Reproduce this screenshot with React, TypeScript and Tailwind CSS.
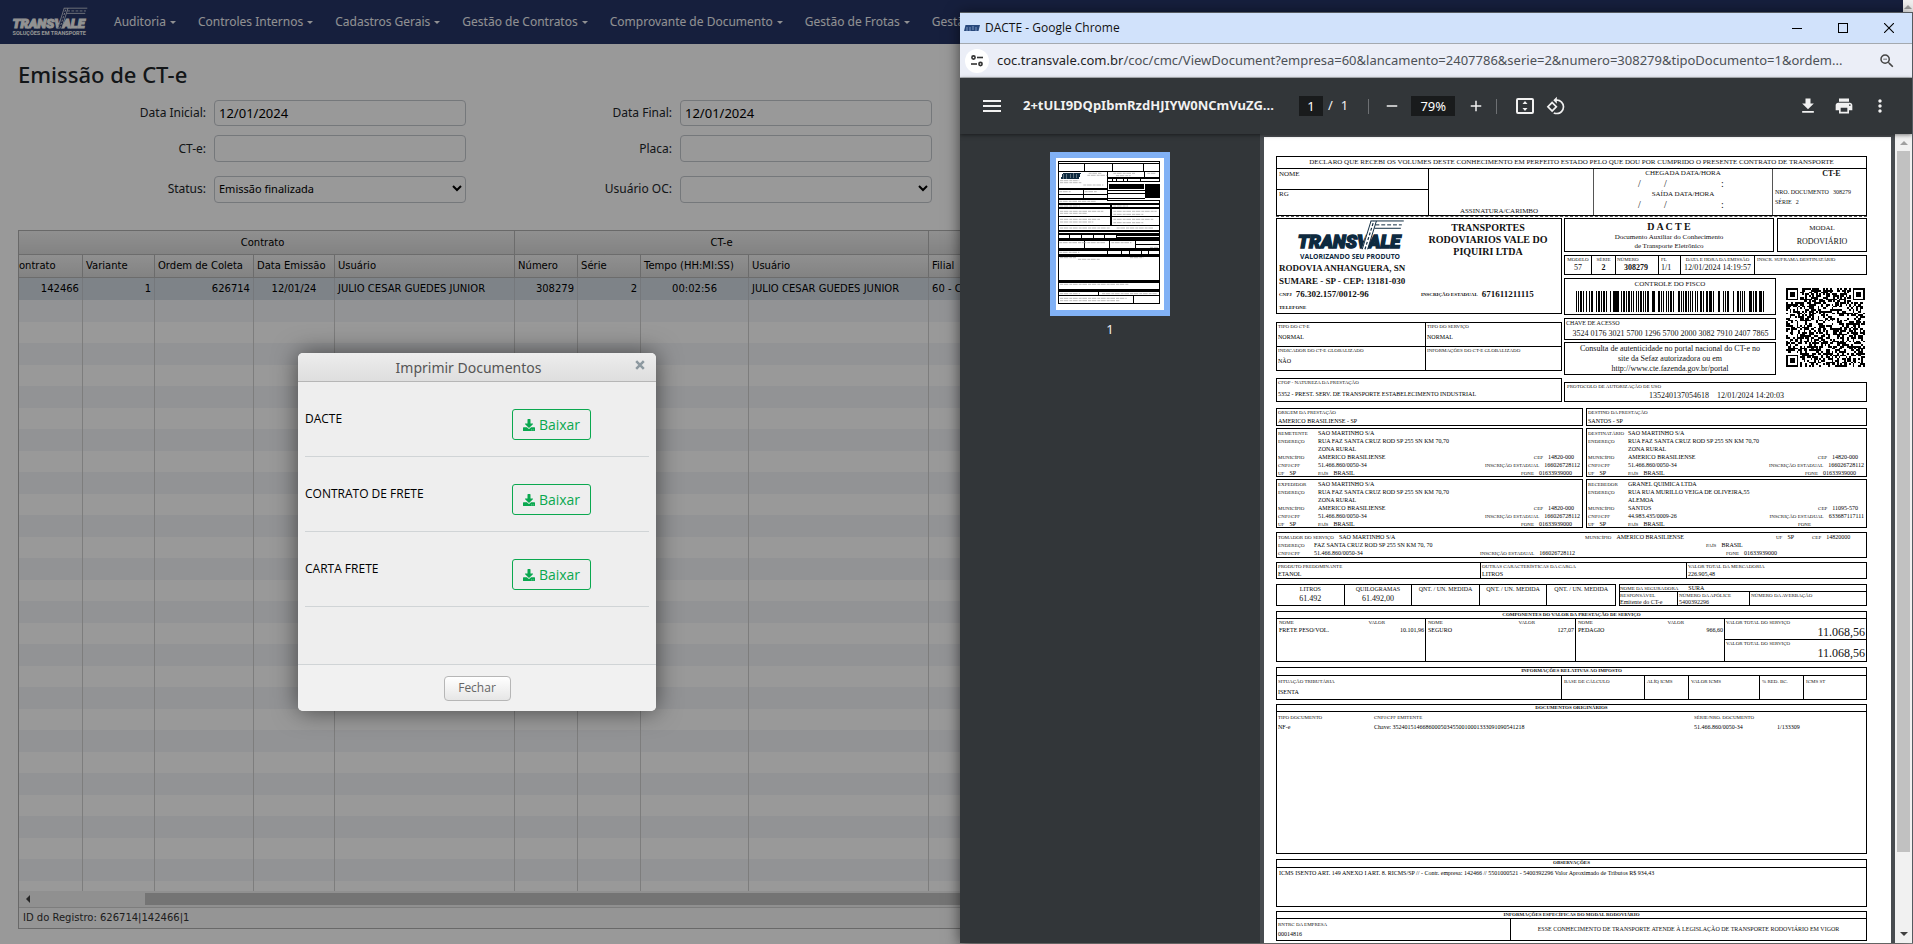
import type { ReactNode } from "react";
import { FaDownload } from "react-icons/fa";
import {
  MdMenu,
  MdRemove,
  MdAdd,
  MdDownload,
  MdPrint,
  MdMoreVert,
  MdZoomOut,
  MdRotate90DegreesCcw,
} from "react-icons/md";

const CODE128 =
  "212222,222122,222221,121223,121322,131222,122213,122312,132212,221213,221312,231212,112232,122132,122231,113222,123122,123221,223211,221132,221231,213212,223112,312131,311222,321122,321221,312212,322112,322211,212123,212321,232121,111323,131123,131321,112313,132113,132311,211313,231113,231311,112133,112331,132131,113123,113321,133121,313121,211331,231131,213113,213311,213131,311123,311321,331121,312113,312311,332111,314111,221411,431111,111224,111422,121124,121421,141122,141221,112214,112412,122114,122411,142112,142211,241211,221114,413111,241112,134111,111242,121142,121241,114212,124112,124211,411212,421112,421211,212141,214121,412121,111143,111341,131141,114113,114311,411113,411311,113141,114131,311141,411131,211412,211214,211232,2331112".split(
    ",",
  );

function barcodePath(digits: string) {
  const codes = [105];
  for (let i = 0; i < digits.length; i += 2) codes.push(Number(digits.slice(i, i + 2)));
  const sum = codes.reduce((a, c, i) => a + c * Math.max(i, 1), 0);
  codes.push(sum % 103, 106);
  let x = 0;
  let d = "";
  codes.forEach((c) =>
    CODE128[c].split("").forEach((w, i) => {
      if (i % 2 === 0) d += `M${x} 0h${w}v20h-${w}z`;
      x += Number(w);
    }),
  );
  return { d, width: x };
}

function qrPath(n: number) {
  let seed = 77;
  const rnd = () => (seed = (seed * 16807) % 2147483647) / 2147483647;
  const inFinder = (x: number, y: number) =>
    (x < 8 && y < 8) || (x >= n - 8 && y < 8) || (x < 8 && y >= n - 8);
  let d = "";
  for (let y = 0; y < n; y++)
    for (let x = 0; x < n; x++) if (rnd() > 0.48 && !inFinder(x, y)) d += `M${x} ${y}h1v1h-1z`;
  [
    [0, 0],
    [n - 7, 0],
    [0, n - 7],
  ].forEach(([x, y]) => {
    d += `M${x} ${y}h7v7h-7zM${x + 1} ${y + 1}v5h5v-5zM${x + 2} ${y + 2}h3v3h-3z`;
  });
  return d;
}

const barcode = barcodePath("35240176302157001296570020003082791024077865");
const qr = qrPath(45);

function Logo({ className, color, gap, tagline, taglineFont, taglineSize }: {
  className: string;
  color: string;
  gap: string;
  tagline: string;
  taglineFont: string;
  taglineSize: number;
}) {
  return (
    <svg viewBox="0 0 110 44" className={className} role="img" aria-label={`TRANSVALE ${tagline}`}>
      <text
        x="53"
        y="30"
        textAnchor="middle"
        fontFamily="Roboto, 'Liberation Sans', sans-serif"
        fontWeight="900"
        fontStyle="italic"
        fontSize="19"
        fill={color}
        stroke={color}
        strokeWidth="1.500"
      >
        TRANSVALE
      </text>
      <path d="M66 31L75 2h6l-9 29z" fill={gap} />
      <path d="M66.500 31L75.500 2M72 31L81 2" stroke={color} strokeWidth="1" fill="none" />
      <path d="M69.300 31L78.300 2" stroke={color} strokeWidth="1.200" strokeDasharray="3 2" />
      <path d="M75 2h34" stroke={color} strokeWidth="1" />
      <path d="M80 6h27" stroke={color} strokeWidth="1" strokeDasharray="4 2" />
      <path d="M79 9.500h27" stroke={color} strokeWidth="1" />
      <text
        x="54"
        y="41"
        textAnchor="middle"
        fontFamily={taglineFont}
        fontWeight="700"
        fontSize={taglineSize}
        fill={color}
      >
        {tagline}
      </text>
    </svg>
  );
}

const menu = [
  "Auditoria",
  "Controles Internos",
  "Cadastros Gerais",
  "Gestão de Contratos",
  "Comprovante de Documento",
  "Gestão de Frotas",
  "Gestão de Pessoas",
];

function NavBar() {
  return (
    <nav className="flex h-11 shrink-0 items-center overflow-hidden bg-[#253466] pl-3">
      <Logo
        className="h-9 w-[76px] shrink-0"
        color="#f4f4f4"
        gap="#253466"
        tagline="SOLUÇÕES EM TRANSPORTE"
        taglineFont="Roboto, 'Liberation Sans', sans-serif"
        taglineSize={8}
      />
      <div className="flex items-center gap-[22px] pl-[26px]">
        {menu.map((m) => (
          <button
            key={m}
            type="button"
            className="flex shrink-0 items-center gap-1 whitespace-nowrap text-[12px] leading-5 text-[#f0f1f4]"
          >
            {m}
            <svg viewBox="0 0 6 3" className="h-[3px] w-[6px]" aria-hidden="true">
              <path d="M0 0h6L3 3z" fill="currentColor" />
            </svg>
          </button>
        ))}
      </div>
    </nav>
  );
}

const fieldClass = "w-full rounded-[4px] border border-[#c4c8ce] bg-white text-black";

function SelectField({ id, value }: { id: string; value: string }) {
  return (
    <div className="relative">
      <select id={id} defaultValue={value} className={`${fieldClass} h-[27px] appearance-none px-1 text-[11px]`}>
        <option value={value}>{value}</option>
      </select>
      <svg viewBox="0 0 10 7" className="pointer-events-none absolute right-[4px] top-[10px] h-[7px] w-[10px]" aria-hidden="true">
        <path d="M1 1l4 4 4-4" fill="none" stroke="#000" strokeWidth="2" />
      </svg>
    </div>
  );
}

function Filters() {
  const label = "text-right text-[12px] leading-5 text-[#212529]";
  return (
    <form className="grid grid-cols-[188px_252px_198px_252px] items-center gap-x-2 pl-[18px]">
      <label htmlFor="di" className={label}>Data Inicial:</label>
      <input id="di" defaultValue="12/01/2024" className={`${fieldClass} h-[26px] px-1 text-[13px]`} />
      <label htmlFor="df" className={label}>Data Final:</label>
      <input id="df" defaultValue="12/01/2024" className={`${fieldClass} h-[26px] px-1 text-[13px]`} />
      <label htmlFor="cte" className={`${label} mt-[9px]`}>CT-e:</label>
      <input id="cte" className={`${fieldClass} mt-[9px] h-[27px] px-1 text-[13px]`} />
      <label htmlFor="placa" className={`${label} mt-[9px]`}>Placa:</label>
      <input id="placa" className={`${fieldClass} mt-[9px] h-[27px] px-1 text-[13px]`} />
      <label htmlFor="status" className={`${label} mt-[13px]`}>Status:</label>
      <div className="mt-[13px]"><SelectField id="status" value="Emissão finalizada" /></div>
      <label htmlFor="uoc" className={`${label} mt-[13px]`}>Usuário OC:</label>
      <div className="mt-[13px]"><SelectField id="uoc" value="" /></div>
    </form>
  );
}

const columns = ["Contrato", "Variante", "Ordem de Coleta", "Data Emissão", "Usuário", "Número", "Série", "Tempo (HH:MI:SS)", "Usuário", "Filial"];
const record = ["142466", "1", "626714", "12/01/24", "JULIO CESAR GUEDES JUNIOR", "308279", "2", "00:02:56", "JULIO CESAR GUEDES JUNIOR", "60 - CTE"];
const alignment = ["text-right", "text-right", "text-right", "text-center", "text-left", "text-right", "text-right", "text-center", "text-left", "text-left"];

function DataGrid() {
  const head = "border-b border-r border-[#b4b4b4] bg-linear-to-b from-[#f0f0f0] to-[#dadada] font-normal";
  return (
    <section className="mx-[18px] mb-[15px] mt-[27px] flex min-h-0 flex-1 flex-col border border-[#b0b0b0] text-[10px] text-black [font-family:'DejaVu_Sans',sans-serif]">
      <div className="min-h-0 flex-1 overflow-hidden">
        <table className="w-full table-fixed border-separate border-spacing-0">
          <colgroup>
            <col className="w-[64px]" />
            <col className="w-[72px]" />
            <col className="w-[99px]" />
            <col className="w-[81px]" />
            <col className="w-[180px]" />
            <col className="w-[63px]" />
            <col className="w-[63px]" />
            <col className="w-[108px]" />
            <col className="w-[180px]" />
            <col />
          </colgroup>
          <thead>
            <tr className="h-6">
              <th colSpan={5} className={`${head} pr-2`}>Contrato</th>
              <th colSpan={4} className={head}>CT-e</th>
              <th className={head} />
            </tr>
            <tr className="h-[23px]">
              {columns.map((c, i) => (
                <th key={i} className={`${head} overflow-hidden whitespace-nowrap text-left ${i === 0 ? "pl-0" : "pl-[3px]"}`}>
                  {i === 0 ? <span className="-ml-[7px]">{c}</span> : c}
                </th>
              ))}
            </tr>
          </thead>
          <tbody>
            <tr className="h-[22px] bg-[#d3dbe3]">
              {record.map((v, i) => (
                <td key={i} className={`overflow-hidden whitespace-nowrap border-r border-[#c3c9cf] px-[3px] ${alignment[i]}`}>{v}</td>
              ))}
            </tr>
            {Array.from({ length: 28 }, (_, r) => (
              <tr key={r} className={r % 2 === 0 ? "h-[22px] bg-[#f3f6f9]" : "h-[21px] bg-white"}>
                {columns.map((_c, i) => (
                  <td key={i} className="border-r border-[#d0d0d0]" />
                ))}
              </tr>
            ))}
          </tbody>
        </table>
      </div>
      <div className="flex h-4 shrink-0 items-center bg-[#f1f1f1] pl-[7px]">
        <svg viewBox="0 0 4 8" className="h-2 w-1" aria-hidden="true"><path d="M4 0v8L0 4z" fill="#404040" /></svg>
        <div className="ml-[115px] h-3 flex-1 bg-[#c1c1c1]" />
      </div>
      <div className="flex h-[21px] shrink-0 items-center border-t border-[#d0d0d0] bg-[#f8f8f8] pl-1 text-[#333] pb-[2px]">
        ID do Registro: 626714|142466|1
      </div>
    </section>
  );
}

function PrintDialog() {
  return (
    <div
      role="dialog"
      aria-label="Imprimir Documentos"
      className="absolute left-[298px] top-[353px] flex w-[358px] flex-col overflow-hidden rounded-[5px] bg-[#eeeeee] shadow-[0_0_25px_rgba(0,0,0,0.55)] [font-family:'Open_Sans',sans-serif]"
    >
      <header className="flex h-[29px] items-center border-b border-[#b6b6b6] bg-linear-to-b from-[#ededed] to-[#dedede] pr-[11px]">
        <h2 className="flex-1 pl-1 text-center text-[14px] text-[#555] [font-family:'Noto_Sans',sans-serif]">Imprimir Documentos</h2>
        <button type="button" aria-label="Fechar janela" className="-mt-1 text-[#8d99a0]">
          <svg viewBox="0 0 10 10" className="size-[10px]">
            <path d="M1.200 1.200l7.600 7.600M8.800 1.200L1.200 8.800" stroke="currentColor" strokeWidth="2.500" />
          </svg>
        </button>
      </header>
      <div className="h-[282px] px-[7px]">
        {["DACTE", "CONTRATO DE FRETE", "CARTA FRETE"].map((name) => (
          <div key={name} className="flex h-[75px] items-center border-b border-[#d0d4d6] pt-[11px]">
            <span className="w-[207px] pb-3 text-[12px] text-black">{name}</span>
            <button type="button" className="flex h-[31px] w-[79px] items-center justify-center gap-1 rounded-[3px] border border-[#0aa84f] text-[14px] text-[#0aa84f]">
              <FaDownload size={12} />
              Baixar
            </button>
          </div>
        ))}
      </div>
      <footer className="flex h-[47px] items-center justify-center border-t border-[#d0d4d6] bg-[#f1f1f1]">
        <button type="button" className="h-[25px] w-[67px] rounded-[4px] border border-[#b6b6b6] bg-linear-to-b from-white to-[#e6e6e6] text-[12px] text-[#666]">
          Fechar
        </button>
      </footer>
    </div>
  );
}

function Thumbnail() {
  const black = "M324 483h306v4H324zM324 490h306v3H324zM324 513h306v4H324zM324 563h149v6H324zM324 581h149v3H324zM324 594h149v5H324zM472 531h158v5H472zM472 543h158v3H472zM477 552h105v16H477zM585 552h45v42h-45zM472 570h112v4H472zM472 578h112v5H472zM472 594h112v3H472zM324 608h149v6H324zM472 600h158v3H472zM472 610h158v4H472zM324 622h306v6H324zM324 648h306v3H324zM324 674h306v4H324zM324 690h306v6H324zM324 700h306v5H324zM500 705h130v3H500zM324 714h306v8H324zM500 710h130v3H500zM556 732h74v3h-74zM324 744h306v9H324zM324 762h306v8H324zM324 840h306v9H324zM324 867h306v9H324zM324 885h306v4H324zM324 909h306v3H324z";
  return (
    <svg viewBox="318 474 324 456" className="h-[152px] w-[108px] bg-white" shapeRendering="crispEdges" role="img" aria-label="Página 1">
      <path d={black} fill="#000" />
      <path d="M325.5 484v427M628.500 484v60M628.500 600v311M403.500 490v24M488.500 490v24M580.500 490v24M472.500 516v84M400.500 566v30M582.500 514v18M484 612v64M481 612v64M402.500 720v26M478.500 720v26M557.500 720v26M358.500 704v12M394.500 704v12M430.500 704v12M464.500 704v12M500.500 704v12M472.500 752v12M515.500 752v12M538.500 752v12M574.500 752v12M596.500 752v12M445.500 874v12M550.500 886v24M486.500 536v8M500.500 536v8M520.500 536v8M533.500 536v8M572.500 536v8" stroke="#000" strokeWidth="3" fill="none" />
      <path d="M416 520h40M412 526h60M330 542h58M330 548h64M400 555h60M328 575h34M404 575h36M328 604h110M490 520h66M498 527h44M592 520h24M330 618h60M490 618h44M330 634h130M490 634h130M330 640h80M490 643h90M330 658h120M490 658h120M330 666h100M490 668h90M330 684h150M500 684h110M328 728h140M484 728h60M600 742h24M328 757h60M330 773h48M384 778h66M540 773h40M330 853h206M330 881h60M456 881h164M330 895h200M330 902h180" stroke="#9a9a9a" strokeWidth="2" strokeDasharray="9 2 14 3" fill="none" shapeRendering="auto" />
      <path d="M333 536l5-17h54l-5 17z" fill="#0e2a3f" />
      <path d="M341 522v14M350 522v14M360 521v14M369 520v14M378 521v14" stroke="#fff" strokeWidth="1" />
    </svg>
  );
}

const box = "border border-black";
const lab = "text-[5px] leading-[7px] text-[#111]";
const val = "text-[6px] leading-2 text-black";

function Pair({ l, v, className }: { l: string; v: string; className: string }) {
  return (
    <span className={`flex items-center gap-[5px] ${className}`}>
      <span className={lab}>{l}</span>
      <span className={val}>{v}</span>
    </span>
  );
}

type PartyData = { role: string; name: string; address: string; area: string; city: string; id: string; cep: string; ie: string; phone: string };

function Party({ p }: { p: PartyData }) {
  const row = (l: string, v: string, right?: ReactNode) => (
    <div className="flex h-2 items-center">
      <span className={`w-10 ${lab}`}>{l}</span>
      <span className={`flex-1 ${val}`}>{v}</span>
      {right}
    </div>
  );
  return (
    <div className={`${box} h-[49px] min-w-0 pl-px`}>
      {row(p.role, p.name)}
      {row("ENDEREÇO", p.address)}
      {row("", p.area)}
      {row("MUNICÍPIO", p.city, <Pair l="CEP" v={p.cep} className="pr-2" />)}
      {row("CNPJ/CPF", p.id, <Pair l="INSCRIÇÃO ESTADUAL" v={p.ie} className="pr-0.5" />)}
      <div className="flex h-2 items-center">
        <Pair l="UF" v="SP" className="w-10" />
        <Pair l="PAÍS" v="BRASIL" className="flex-1" />
        <Pair l="FONE" v={p.phone} className={p.phone ? "pr-[10px]" : "pr-[50px]"} />
      </div>
    </div>
  );
}

const parties: PartyData[] = [
  { role: "REMETENTE", name: "SAO MARTINHO S/A", address: "RUA FAZ SANTA CRUZ ROD SP 255 SN KM 70,70", area: "ZONA RURAL", city: "AMERICO BRASILIENSE", id: "51.466.860/0050-34", cep: "14820-000", ie: "166026728112", phone: "01633939000" },
  { role: "DESTINATÁRIO", name: "SAO MARTINHO S/A", address: "RUA FAZ SANTA CRUZ ROD SP 255 SN KM 70,70", area: "ZONA RURAL", city: "AMERICO BRASILIENSE", id: "51.466.860/0050-34", cep: "14820-000", ie: "166026728112", phone: "01633939000" },
  { role: "EXPEDIDOR", name: "SAO MARTINHO S/A", address: "RUA FAZ SANTA CRUZ ROD SP 255 SN KM 70,70", area: "ZONA RURAL", city: "AMERICO BRASILIENSE", id: "51.466.860/0050-34", cep: "14820-000", ie: "166026728112", phone: "01633939000" },
  { role: "RECEBEDOR", name: "GRANEL QUIMICA LTDA", address: "RUA RUA MURILLO VEIGA DE OLIVEIRA,55", area: "ALEMOA", city: "SANTOS", id: "44.983.435/0009-26", cep: "11095-570", ie: "633687117111", phone: "" },
];

function Stack({ l, v, className = "", big = "" }: { l: string; v?: string; className?: string; big?: string }) {
  return (
    <div className={`flex min-w-0 flex-col whitespace-nowrap ${className}`}>
      <span className={lab}>{l}</span>
      {v ? <span className={big || val}>{v}</span> : null}
    </div>
  );
}

function Slashes() {
  return (
    <div className="grid h-[13px] grid-cols-[44px_26px_57px_1fr] text-[10px] leading-[13px]">
      <span />
      <span>/</span>
      <span>/</span>
      <span>:</span>
    </div>
  );
}

function SectionTitle({ children, className = "h-[7px]" }: { children: ReactNode; className?: string }) {
  return <div className={`border-b border-black text-center text-[5px] font-bold leading-[6px] ${className}`}>{children}</div>;
}

function Receipt() {
  return (
    <div className={box}>
      <div className="h-3 whitespace-nowrap border-b border-black text-center text-[7px] leading-[11px]">
        DECLARO QUE RECEBI OS VOLUMES DESTE CONHECIMENTO EM PERFEITO ESTADO PELO QUE DOU POR CUMPRIDO O PRESENTE CONTRATO DE TRANSPORTE
      </div>
      <div className="grid h-[46px] grid-cols-[152px_165px_179px_1fr] text-[7px] leading-[10px]">
        <div className="grid grid-rows-[21px_1fr] border-r border-black">
          <div className="border-b border-black pl-0.5">NOME</div>
          <div className="pl-0.5 leading-2">RG</div>
        </div>
        <div className="flex items-end justify-center border-r border-[#555] pr-6 leading-2">ASSINATURA/CARIMBO</div>
        <div className="border-r border-[#555]">
          <div className="text-center leading-2">CHEGADA DATA/HORA</div>
          <Slashes />
          <div className="text-center leading-2">SAÍDA DATA/HORA</div>
          <Slashes />
        </div>
        <div className="px-0.5">
          <div className="pl-6 text-center text-[8px] font-bold">CT-E</div>
          <div className="mt-2 flex gap-1 whitespace-nowrap text-[6px]"><span>NRO. DOCUMENTO</span><span>308279</span></div>
          <div className="flex gap-1 text-[6px]"><span>SÉRIE</span><span>2</span></div>
        </div>
      </div>
    </div>
  );
}

function IssuerAndKeys() {
  const addr = "flex h-[13px] items-center whitespace-nowrap text-[9px] font-bold leading-[13px]";
  return (
    <div className="grid grid-cols-[286px_303px] gap-x-[2px] border-t border-dashed border-[#555] pt-px">
      <div className="flex flex-col">
        <div className={`${box} h-[96px] pl-0.5`}>
          <div className="flex h-[43px]">
            <Logo className="ml-4 h-[43px] w-[112px]" color="#0e2a3f" gap="#ffffff" tagline="VALORIZANDO SEU PRODUTO" taglineFont="'Open Sans', sans-serif" taglineSize={7} />
            <p className="flex-1 whitespace-nowrap pl-2 pt-[3px] text-center text-[10px] font-bold leading-[12px]">
              TRANSPORTES<br />RODOVIARIOS VALE DO<br />PIQUIRI LTDA
            </p>
          </div>
          <div className={addr}>RODOVIA ANHANGUERA, SN</div>
          <div className={addr}>SUMARE - SP - CEP: 13181-030</div>
          <div className={addr}>
            <span className="flex w-[142px] gap-1"><span className="text-[5px]">CNPJ</span><span>76.302.157/0012-96</span></span>
            <span className="flex gap-1"><span className="text-[5px]">INSCRIÇÃO ESTADUAL</span><span>671611211115</span></span>
          </div>
          <div className={addr}><span className="text-[5px]">TELEFONE</span></div>
        </div>
        <div className={`${box} mt-2 grid h-[49px] grid-cols-[149px_1fr] grid-rows-2`}>
          <Stack className="gap-[3px] border-b border-r border-black pl-px" l="TIPO DO CT-E" v="NORMAL" />
          <Stack className="gap-[3px] border-b border-black pl-px" l="TIPO DO SERVIÇO" v="NORMAL" />
          <Stack className="gap-[3px] border-r border-black pl-px" l="INDICADOR DO CT-E GLOBALIZADO" v="NÃO" />
          <Stack className="pl-px" l="INFORMAÇÕES DO CT-E GLOBALIZADO" />
        </div>
        <div className={`${box} mt-[7px] h-6`}>
          <Stack className="gap-1 pl-px" l="CFOP - NATUREZA DA PRESTAÇÃO" v="5352 - PREST. SERV. DE TRANSPORTE ESTABELECIMENTO INDUSTRIAL" />
        </div>
      </div>
      <div className="flex flex-col">
        <div className="grid h-[34px] grid-cols-[210px_1fr] gap-x-[3px] text-center">
          <div className={`${box} pt-0.5`}>
            <div className="text-[10px] font-bold leading-[12px]">D A C T E</div>
            <div className="text-[7px] leading-[9px]">Documento Auxiliar do Conhecimento<br />de Transporte Eletrônico</div>
          </div>
          <div className={`${box} flex flex-col gap-1 pt-1`}>
            <span className="text-[7px] leading-[10px]">MODAL</span>
            <span className="text-[8px] leading-[10px]">RODOVIÁRIO</span>
          </div>
        </div>
        <div className={`${box} mt-[3px] grid h-5 grid-cols-[27px_24px_43px_22px_74px_1fr] divide-x divide-black`}>
          <Stack l="MODELO" v="57" className="items-center" big="text-[8px] leading-[10px]" />
          <Stack l="SÉRIE" v="2" className="items-center" big="text-[8px] font-bold leading-[10px]" />
          <Stack l="NÚMERO" v="308279" className="pl-px" big="pl-[7px] text-[8px] font-bold leading-[10px]" />
          <Stack l="FL" v="1/1" className="pl-0.5" big="text-[8px] leading-[10px]" />
          <Stack l="DATA E HORA DA EMISSÃO" v="12/01/2024 14:19:57" className="items-center" big="text-[8px] leading-[10px]" />
          <Stack l="INSCR. SUFRAMA DESTINATÁRIO" className="pl-0.5" />
        </div>
        <div className="mt-[3px] grid grid-cols-[212px_1fr]">
          <div>
            <div className={`${box} h-[37px] px-[11px] text-center text-[7px] leading-[10px]`}>
              CONTROLE DO FISCO
              <svg viewBox={`0 0 ${barcode.width} 20`} preserveAspectRatio="none" shapeRendering="crispEdges" className="mt-0.5 h-[21px] w-full" role="img" aria-label="Código de barras">
                <path d={barcode.d} fill="#000" />
              </svg>
            </div>
            <div className={`${box} mt-[3px] h-[22px] whitespace-nowrap pl-px`}>
              <div className="text-[6px] leading-[9px]">CHAVE DE ACESSO</div>
              <div className="text-center text-[8px] leading-[11px]">3524 0176 3021 5700 1296 5700 2000 3082 7910 2407 7865</div>
            </div>
            <div className={`${box} mt-0.5 h-[33px] whitespace-nowrap pt-px text-center text-[8px] leading-[10px]`}>
              Consulta de autenticidade no portal nacional do CT-e no<br />site da Sefaz autorizadora ou em<br />http://www.cte.fazenda.gov.br/portal
            </div>
          </div>
          <svg viewBox="0 0 45 45" shapeRendering="crispEdges" className="ml-[10px] mt-[10px] size-[79px]" role="img" aria-label="QR Code">
            <path d={qr} fill="#000" />
          </svg>
        </div>
        <div className={`${box} mt-[7px] h-5 pl-0.5`}>
          <div className={lab}>PROTOCOLO DE AUTORIZAÇÃO DE USO</div>
          <div className="flex justify-center gap-2 text-[8px] leading-[11px]"><span>135240137054618</span><span>12/01/2024 14:20:03</span></div>
        </div>
      </div>
    </div>
  );
}

function ValueComponent({ name, value }: { name: string; value: string }) {
  return (
    <div className="grid grid-cols-[1fr_auto] content-start border-r border-black pl-0.5">
      <span className={lab}>NOME</span>
      <span className={`${lab} pr-10 text-right`}>VALOR</span>
      <span className={val}>{name}</span>
      <span className={`${val} pr-px text-right`}>{value}</span>
    </div>
  );
}

function Dacte() {
  return (
    <article className="flex w-[627px] shrink-0 flex-col overflow-hidden bg-white pl-3 pr-6 pt-[19px] text-[#111] [font-family:'Liberation_Serif',serif]">
      <Receipt />
      <IssuerAndKeys />
      <div className="mt-1.5 grid grid-cols-[307px_281px] gap-x-[3px] gap-y-[2px]">
        <div className={`${box} h-[18px]`}><Stack l="ORIGEM DA PRESTAÇÃO" v="AMERICO BRASILIENSE - SP" className="gap-px pl-px" /></div>
        <div className={`${box} h-[18px]`}><Stack l="DESTINO DA PRESTAÇÃO" v="SANTOS - SP" className="gap-px pl-px" /></div>
        {parties.map((p) => <Party key={p.role} p={p} />)}
      </div>
      <div className={`${box} mt-1 h-[27px] pl-px`}>
        <div className="flex h-2 items-center"><Pair l="TOMADOR DO SERVIÇO" v="SAO MARTINHO S/A" className="w-[307px]" /><Pair l="MUNICÍPIO" v="AMERICO BRASILIENSE" className="w-[191px]" /><Pair l="UF" v="SP" className="w-9" /><Pair l="CEP" v="14820000" className="" /></div>
        <div className="flex h-2 items-center"><span className={`w-9 ${lab}`}>ENDEREÇO</span><span className={`w-[392px] ${val}`}>FAZ SANTA CRUZ ROD SP 255 SN KM 70, 70</span><Pair l="PAÍS" v="BRASIL" className="" /></div>
        <div className="flex h-2 items-center"><span className={`w-9 ${lab}`}>CNPJ/CPF</span><span className={`w-[166px] ${val}`}>51.466.860/0050-34</span><Pair l="INSCRIÇÃO ESTADUAL" v="166026728112" className="w-[246px]" /><Pair l="FONE" v="01633939000" className="" /></div>
      </div>
      <div className={`${box} mt-1 grid h-[17px] grid-cols-[204px_206px_1fr] divide-x divide-black`}>
        <Stack l="PRODUTO PREDOMINANTE" v="ETANOL" className="pl-px" />
        <Stack l="OUTRAS CARACTERÍSTICAS DA CARGA" v="LITROS" className="pl-px" />
        <Stack l="VALOR TOTAL DA MERCADORIA" v="226.905,48" className="pl-px" />
      </div>
      <div className="mt-[5px] grid h-[22px] grid-cols-[340px_248px] gap-x-[3px]">
        <div className={`${box} grid grid-cols-5 divide-x divide-black text-center text-[6px] leading-2`}>
          <div>LITROS<div className="text-[8px] leading-[12px]">61.492</div></div>
          <div>QUILOGRAMAS<div className="text-[8px] leading-[12px]">61.492,00</div></div>
          <div className="whitespace-nowrap">QNT. / UN. MEDIDA</div>
          <div className="whitespace-nowrap">QNT. / UN. MEDIDA</div>
          <div className="whitespace-nowrap">QNT. / UN. MEDIDA</div>
        </div>
        <div className={box}>
          <div className="h-[7px] border-b border-black"><Pair l="NOME DA SEGURADORA" v="SURA" className="h-[6px] gap-[10px]" /></div>
          <div className="grid h-[13px] grid-cols-[58px_72px_1fr] divide-x divide-black">
            <Stack l="RESPONSÁVEL" v="Emitente do CT-e" big="text-[6px] leading-[6px]" />
            <Stack l="NÚMERO DA APÓLICE" v="5400392296" className="pl-px" big="text-[6px] leading-[6px]" />
            <Stack l="NÚMERO DA AVERBAÇÃO" className="pl-px" />
          </div>
        </div>
      </div>
      <div className={`${box} mt-[5px]`}>
        <SectionTitle>COMPONENTES DO VALOR DA PRESTAÇÃO DE SERVIÇO</SectionTitle>
        <div className="grid h-[42px] grid-cols-[149px_150px_149px_1fr]">
          <ValueComponent name="FRETE PESO/VOL." value="10.101,96" />
          <ValueComponent name="SEGURO" value="127,07" />
          <ValueComponent name="PEDAGIO" value="966,60" />
          <div className="grid grid-rows-2">
            <Stack l="VALOR TOTAL DO SERVIÇO" v="11.068,56" className="border-b border-black pl-px" big="self-end pr-px text-[12px] leading-[13px]" />
            <Stack l="VALOR TOTAL DO SERVIÇO" v="11.068,56" className="pl-px" big="self-end pr-px text-[12px] leading-[13px]" />
          </div>
        </div>
      </div>
      <div className={`${box} mt-[5px]`}>
        <SectionTitle className="h-2">INFORMAÇÕES RELATIVAS AO IMPOSTO</SectionTitle>
        <div className="grid h-[23px] grid-cols-[285px_83px_44px_71px_44px_1fr] divide-x divide-black">
          <Stack l="SITUAÇÃO TRIBUTÁRIA" v="ISENTA" className="gap-[3px] pl-px pt-0.5" />
          <Stack l="BASE DE CÁLCULO" className="pl-0.5 pt-0.5" />
          <Stack l="ALÍQ ICMS" className="pl-0.5 pt-0.5" />
          <Stack l="VALOR ICMS" className="pl-0.5 pt-0.5" />
          <Stack l="% RED. BC." className="pl-0.5 pt-0.5" />
          <Stack l="ICMS ST" className="pl-0.5 pt-0.5" />
        </div>
      </div>
      <div className={`${box} mt-1`}>
        <SectionTitle>DOCUMENTOS ORIGINÁRIOS</SectionTitle>
        <div className="grid h-[141px] grid-cols-[96px_320px_83px_1fr] content-start gap-y-0.5 pl-px pt-0.5">
          <span className={lab}>TIPO DOCUMENTO</span><span className={lab}>CNPJ/CPF EMITENTE</span><span className={`whitespace-nowrap ${lab}`}>SÉRIE/NRO. DOCUMENTO</span><span />
          <span className={val}>NF-e</span><span className={val}>Chave: 35240151466860005034550010001333091090541218</span><span className={val}>51.466.860/0050-34</span><span className={val}>1/133309</span>
        </div>
      </div>
      <div className={`${box} mt-[5px]`}>
        <SectionTitle className="h-2">OBSERVAÇÕES</SectionTitle>
        <div className={`h-[38px] pl-0.5 pt-px ${val}`}>ICMS ISENTO ART. 149 ANEXO I ART. 8. RICMS/SP // - Contr. empresa: 142466 // 5501000521 - 5400392296 Valor Aproximado de Tributos R$ 934,43</div>
      </div>
      <div className={`${box} mt-1`}>
        <SectionTitle>INFORMAÇÕES ESPECÍFICAS DO MODAL RODOVIÁRIO</SectionTitle>
        <div className="grid h-[21px] grid-cols-[234px_1fr] divide-x divide-black">
          <Stack l="RNTRC DA EMPRESA" v="00014816" className="gap-0.5 pl-px pt-0.5" />
          <div className="flex items-center justify-center text-[6px]">ESSE CONHECIMENTO DE TRANSPORTE ATENDE À LEGISLAÇÃO DE TRANSPORTE RODOVIÁRIO EM VIGOR</div>
        </div>
      </div>
      <div className="mt-[3px] grid h-5 shrink-0 grid-cols-[436px_151px] gap-x-1">
        <div className={box} />
        <div className={box} />
      </div>
    </article>
  );
}

function PdfToolbar() {
  const field = "h-5 bg-[#191b1c] text-center text-white";
  return (
    <div className="relative flex h-14 shrink-0 items-center bg-[#323639] pr-[22px] text-[13px] text-[#f1f1f1] shadow-[0_1px_4px_rgba(0,0,0,0.5)]">
      <button type="button" aria-label="Menu" className="ml-5"><MdMenu size={24} /></button>
      <span className="ml-[19px] w-[256px] whitespace-nowrap font-bold">2+tULI9DQpIbmRzdHJIYW0NCmVuZG...</span>
      <input aria-label="Página" defaultValue="1" className={`${field} ml-5 w-6`} />
      <span className="ml-[5px] flex gap-2"><span>/</span><span>1</span></span>
      <span className="ml-5 h-[15px] w-px bg-[#6d7073]" />
      <button type="button" aria-label="Diminuir zoom" className="ml-[14px]"><MdRemove size={18} /></button>
      <input aria-label="Zoom" defaultValue="79%" className={`${field} ml-[10px] w-11`} />
      <button type="button" aria-label="Aumentar zoom" className="ml-3"><MdAdd size={18} /></button>
      <span className="ml-[11px] h-[15px] w-px bg-[#6d7073]" />
      <button type="button" aria-label="Ajustar à página" className="ml-[19px]">
        <svg viewBox="0 0 18 16" className="h-4 w-[18px]">
          <rect x="1" y="1" width="16" height="14" rx="1" fill="none" stroke="currentColor" strokeWidth="2" />
          <path d="M9 3l2.500 3h-5zM9 13l2.500-3h-5z" fill="currentColor" />
        </svg>
      </button>
      <button type="button" aria-label="Girar" className="ml-3"><MdRotate90DegreesCcw size={20} /></button>
      <span className="flex-1" />
      <button type="button" aria-label="Fazer download"><MdDownload size={20} /></button>
      <button type="button" aria-label="Imprimir" className="ml-4"><MdPrint size={20} /></button>
      <button type="button" aria-label="Mais ações" className="ml-4"><MdMoreVert size={20} /></button>
    </div>
  );
}

function PopupWindow() {
  return (
    <section aria-label="DACTE" className="absolute bottom-px right-0 top-3 flex w-[953px] flex-col overflow-hidden border-r border-t border-[#555a60] bg-[#323639] shadow-[0_2px_14px_rgba(0,0,0,0.6)]">
      <header className="flex h-[31px] shrink-0 items-center border-b border-[#a4a9af] bg-[#d1e2fb] pl-1 pr-[18px] text-[12px] text-[#111]">
        <svg viewBox="0 0 16 8" className="h-2 w-4" aria-hidden="true">
          <path d="M1.500 1H16l-1.500 6H0z" fill="#28487c" />
          <path d="M3 3v4M6 3v4M9 2v4M12 3v4" stroke="#9db8dd" strokeWidth="0.700" />
        </svg>
        <h1 className="ml-[5px] flex-1 text-[12px] [font-family:'Open_Sans',sans-serif]">DACTE - Google Chrome</h1>
        <button type="button" aria-label="Minimizar" className="mr-9"><svg viewBox="0 0 10 10" className="size-[10px]"><path d="M0 5.500h10" stroke="#000" /></svg></button>
        <button type="button" aria-label="Maximizar" className="mr-9"><svg viewBox="0 0 10 10" className="size-[10px]"><rect x=".5" y=".5" width="9" height="9" fill="none" stroke="#000" /></svg></button>
        <button type="button" aria-label="Fechar"><svg viewBox="0 0 10 10" className="size-[10px]"><path d="M0 0l10 10M10 0L0 10" stroke="#000" strokeWidth="1.100" /></svg></button>
      </header>
      <div className="flex h-[34px] shrink-0 items-center border-b border-[#b7babf] bg-[#ebeef7] pl-[5px] pr-4">
        <button type="button" aria-label="Ver informações do site" className="flex size-6 items-center justify-center rounded-full bg-white">
          <svg viewBox="0 0 12 12" className="size-3" fill="none" stroke="#333" strokeWidth="1.600">
            <circle cx="2.500" cy="2.500" r="1.600" /><path d="M6 2.500h6" /><circle cx="9.500" cy="9" r="1.600" /><path d="M0 9h6" />
          </svg>
        </button>
        <p className="ml-2 min-w-0 flex-1 whitespace-nowrap text-[13px] text-[#4d5156] [font-family:'Noto_Sans',sans-serif]">
          <span className="text-[#1f1f1f]">coc.transvale.com.br</span>/coc/cmc/ViewDocument?empresa=60&amp;lancamento=2407786&amp;serie=2&amp;numero=308279&amp;tipoDocumento=1&amp;ordem...
        </p>
        <button type="button" aria-label="Zoom" className="ml-3 text-[#444]"><MdZoomOut size={18} /></button>
      </div>
      <PdfToolbar />
      <div className="flex min-h-0 flex-1">
        <aside className="flex w-[300px] shrink-0 flex-col items-center pt-[18px]">
          <button type="button" className="border-[6px] border-[#81b1f5]"><Thumbnail /></button>
          <span className="mt-1 text-[13px] text-[#f1f1f1]">1</span>
        </aside>
        <div className="flex min-w-0 flex-1 overflow-hidden bg-[#484c50] pl-1 pt-[3px]">
          <Dacte />
        </div>
        <div className="flex w-[17px] shrink-0 flex-col items-center bg-[#f1f1f1]">
          <svg viewBox="0 0 8 4" className="mb-[6px] mt-[7px] h-1 w-2" aria-hidden="true"><path d="M0 4h8L4 0z" fill="#a0a0a0" /></svg>
          <div className="w-[13px] flex-1 bg-[#c1c1c1]" />
          <svg viewBox="0 0 8 4" className="mb-[7px] mt-[80px] h-1 w-2" aria-hidden="true"><path d="M0 0h8L4 4z" fill="#404040" /></svg>
        </div>
      </div>
    </section>
  );
}

export default function App() {
  return (
    <div className="relative flex h-screen flex-col overflow-hidden bg-white [font-family:'Noto_Sans',sans-serif]">
      <NavBar />
      <h1 className="mb-[10px] mt-[15px] pl-[18px] text-[22px] font-medium leading-[31px] text-[#212529]">Emissão de CT-e</h1>
      <Filters />
      <DataGrid />
      <div className="absolute inset-0 bg-black/40" />
      <div className="absolute right-0 top-0 flex h-3 w-[10px] items-end justify-center bg-[#f1f1f1] pb-[3px]">
        <svg viewBox="0 0 8 4" className="h-1 w-2" aria-hidden="true"><path d="M0 4h8L4 0z" fill="#a0a0a0" /></svg>
      </div>
      <PrintDialog />
      <PopupWindow />
    </div>
  );
}
